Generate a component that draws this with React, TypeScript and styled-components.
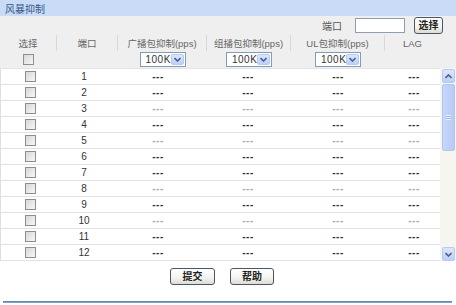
import React from 'react';
import styled, { createGlobalStyle } from 'styled-components';

const GlobalStyle = createGlobalStyle`
  html, body {
    margin: 0;
    padding: 0;
    background: #fff;
  }
  body {
    font-family: "Liberation Sans", "Noto Sans CJK SC", sans-serif;
    font-size: 10px;
    color: #444;
  }
`;

const HEAD_COLS = '57px 61px 89px 84px 94px 55px 16px';
const BODY_COLS = '59px 48px 100px 80px 100px 52px';

const Page = styled.div`
  width: 456px;
  height: 305px;
  display: flex;
  flex-direction: column;
  background: #fff;
  overflow: hidden;
`;

const TitleBar = styled.div`
  height: 16px;
  display: flex;
  align-items: center;
  padding-left: 5px;
  background: #c9dbf6;
  color: #35568a;
  font-size: 10px;
`;

const ToolBar = styled.div`
  height: 19px;
  display: flex;
  align-items: center;
  justify-content: flex-end;
  padding-right: 13px;
  background: #efefef;
`;

const Label = styled.span`
  margin-right: 13px;
  color: #555;
`;

const TextInput = styled.input`
  box-sizing: border-box;
  width: 50px;
  height: 15px;
  margin: 0 9px 0 0;
  padding: 0;
  border: 1px solid #8f9eae;
  background: #fff;
`;

const PushButton = styled.button<{ $w: number }>`
  box-sizing: border-box;
  width: ${p => p.$w}px;
  height: 17px;
  padding: 0;
  border: 1px solid #4a5566;
  border-radius: 3px;
  background: linear-gradient(#ffffff, #f3f3ef 60%, #dcdcd4);
  font-family: "Liberation Sans", "Noto Sans CJK SC", sans-serif;
  font-size: 10px;
  font-weight: bold;
  color: #222;
  line-height: 15px;
`;

const HeadRow = styled.div<{ $h: number }>`
  display: grid;
  grid-template-columns: ${HEAD_COLS};
  height: ${p => p.$h}px;
  background: #efefef;
`;

const HeadCell = styled.div<{ $divider?: boolean }>`
  display: flex;
  align-items: center;
  justify-content: center;
  color: #666;
  font-size: 9.5px;
  white-space: nowrap;
  border-right: ${p => (p.$divider ? '1px solid #d8d8d8' : 'none')};
`;

const Body = styled.div`
  display: flex;
  height: 193px;
`;

const Rows = styled.div`
  width: 439px;
  border-left: 1px solid #dedede;
  border-top: 1px solid #e4e4e4;
`;

const Row = styled.div`
  display: grid;
  grid-template-columns: ${BODY_COLS};
  height: 15px;
  border-bottom: 1px solid #e2e2e2;
`;

const Cell = styled.div<{ $faint?: boolean }>`
  display: flex;
  align-items: center;
  justify-content: center;
  color: ${p => (p.$faint ? '#a8a8a8' : '#333')};
`;

const Dash = styled(Cell)`
  font-weight: bold;
  letter-spacing: 0.5px;
`;

const Check = styled.span`
  display: inline-block;
  box-sizing: border-box;
  width: 11px;
  height: 11px;
  border: 1px solid #8a8f96;
  background: linear-gradient(135deg, #d8d8d4, #f6f6f4);
`;

const SelectBox = styled.div`
  box-sizing: border-box;
  width: 46px;
  height: 15px;
  display: flex;
  align-items: center;
  justify-content: space-between;
  padding: 0 1px 0 5px;
  border: 1px solid #7f9db9;
  background: #fff;
  color: #333;
  font-size: 10px;
  letter-spacing: 0.5px;
`;

const ArrowBtn = styled.span<{ $h?: number }>`
  box-sizing: border-box;
  width: 13px;
  height: ${p => p.$h ?? 11}px;
  display: flex;
  align-items: center;
  justify-content: center;
  border: 1px solid #b7c9f4;
  border-radius: 2px;
  background: linear-gradient(#dce7fd, #bccff8);
`;

const ScrollBar = styled.div`
  width: 16px;
  display: flex;
  flex-direction: column;
  align-items: center;
  gap: 1px;
  padding-top: 1px;
  background: #f6f5ef;
  box-sizing: border-box;
`;

const Thumb = styled.div`
  box-sizing: border-box;
  width: 13px;
  height: 67px;
  display: flex;
  align-items: center;
  justify-content: center;
  border: 1px solid #b1c4f2;
  border-radius: 2px;
  background: linear-gradient(90deg, #c6d6fb, #b8cbf6);
`;

const Grip = styled.span`
  width: 5px;
  height: 5px;
  background: repeating-linear-gradient(#eef3ff 0 1px, #9cb1e3 1px 2px);
`;

const Track = styled.div`
  flex: 1;
`;

const Footer = styled.div`
  display: flex;
  justify-content: center;
  gap: 15px;
  padding: 7px 12px 0 0;
`;

const BottomLine = styled.div`
  margin: 16px 4px 0 3px;
  height: 2px;
  background: linear-gradient(#4f7ea6, #8fb0cc);
`;

const Chevron = ({ up }: { up?: boolean }) => (
  <svg width="7" height="5" viewBox="0 0 7 5">
    <path
      d={up ? 'M0.5 4 L3.5 1 L6.5 4' : 'M0.5 1 L3.5 4 L6.5 1'}
      fill="none"
      stroke="#4d6185"
      strokeWidth="1.6"
    />
  </svg>
);

const Select = () => (
  <SelectBox>
    100K
    <ArrowBtn>
      <Chevron />
    </ArrowBtn>
  </SelectBox>
);

const ports = Array.from({ length: 12 }, (_, i) => i + 1);
const faintRows = [3, 5, 8, 10];

const App: React.FC = () => (
  <>
    <GlobalStyle />
    <Page>
      <TitleBar>风暴抑制</TitleBar>
      <ToolBar>
        <Label>端口</Label>
        <TextInput type="text" />
        <PushButton $w={29}>选择</PushButton>
      </ToolBar>

      <HeadRow $h={16}>
        <HeadCell $divider>选择</HeadCell>
        <HeadCell $divider>端口</HeadCell>
        <HeadCell $divider>广播包抑制(pps)</HeadCell>
        <HeadCell $divider>组播包抑制(pps)</HeadCell>
        <HeadCell $divider>UL包抑制(pps)</HeadCell>
        <HeadCell>LAG</HeadCell>
        <HeadCell />
      </HeadRow>
      <HeadRow $h={17}>
        <HeadCell><Check /></HeadCell>
        <HeadCell />
        <HeadCell><Select /></HeadCell>
        <HeadCell><Select /></HeadCell>
        <HeadCell><Select /></HeadCell>
        <HeadCell />
        <HeadCell />
      </HeadRow>

      <Body>
        <Rows>
          {ports.map(n => {
            const faint = faintRows.includes(n);
            return (
              <Row key={n}>
                <Cell><Check /></Cell>
                <Cell>{n}</Cell>
                <Dash $faint={faint}>---</Dash>
                <Dash $faint={faint}>---</Dash>
                <Dash $faint={faint}>---</Dash>
                <Dash $faint={faint}>---</Dash>
              </Row>
            );
          })}
        </Rows>
        <ScrollBar>
          <ArrowBtn $h={14}>
            <Chevron up />
          </ArrowBtn>
          <Thumb>
            <Grip />
          </Thumb>
          <Track />
          <ArrowBtn $h={14}>
            <Chevron />
          </ArrowBtn>
        </ScrollBar>
      </Body>

      <Footer>
        <PushButton $w={45}>提交</PushButton>
        <PushButton $w={44}>帮助</PushButton>
      </Footer>
      <BottomLine />
    </Page>
  </>
);

export default App;
